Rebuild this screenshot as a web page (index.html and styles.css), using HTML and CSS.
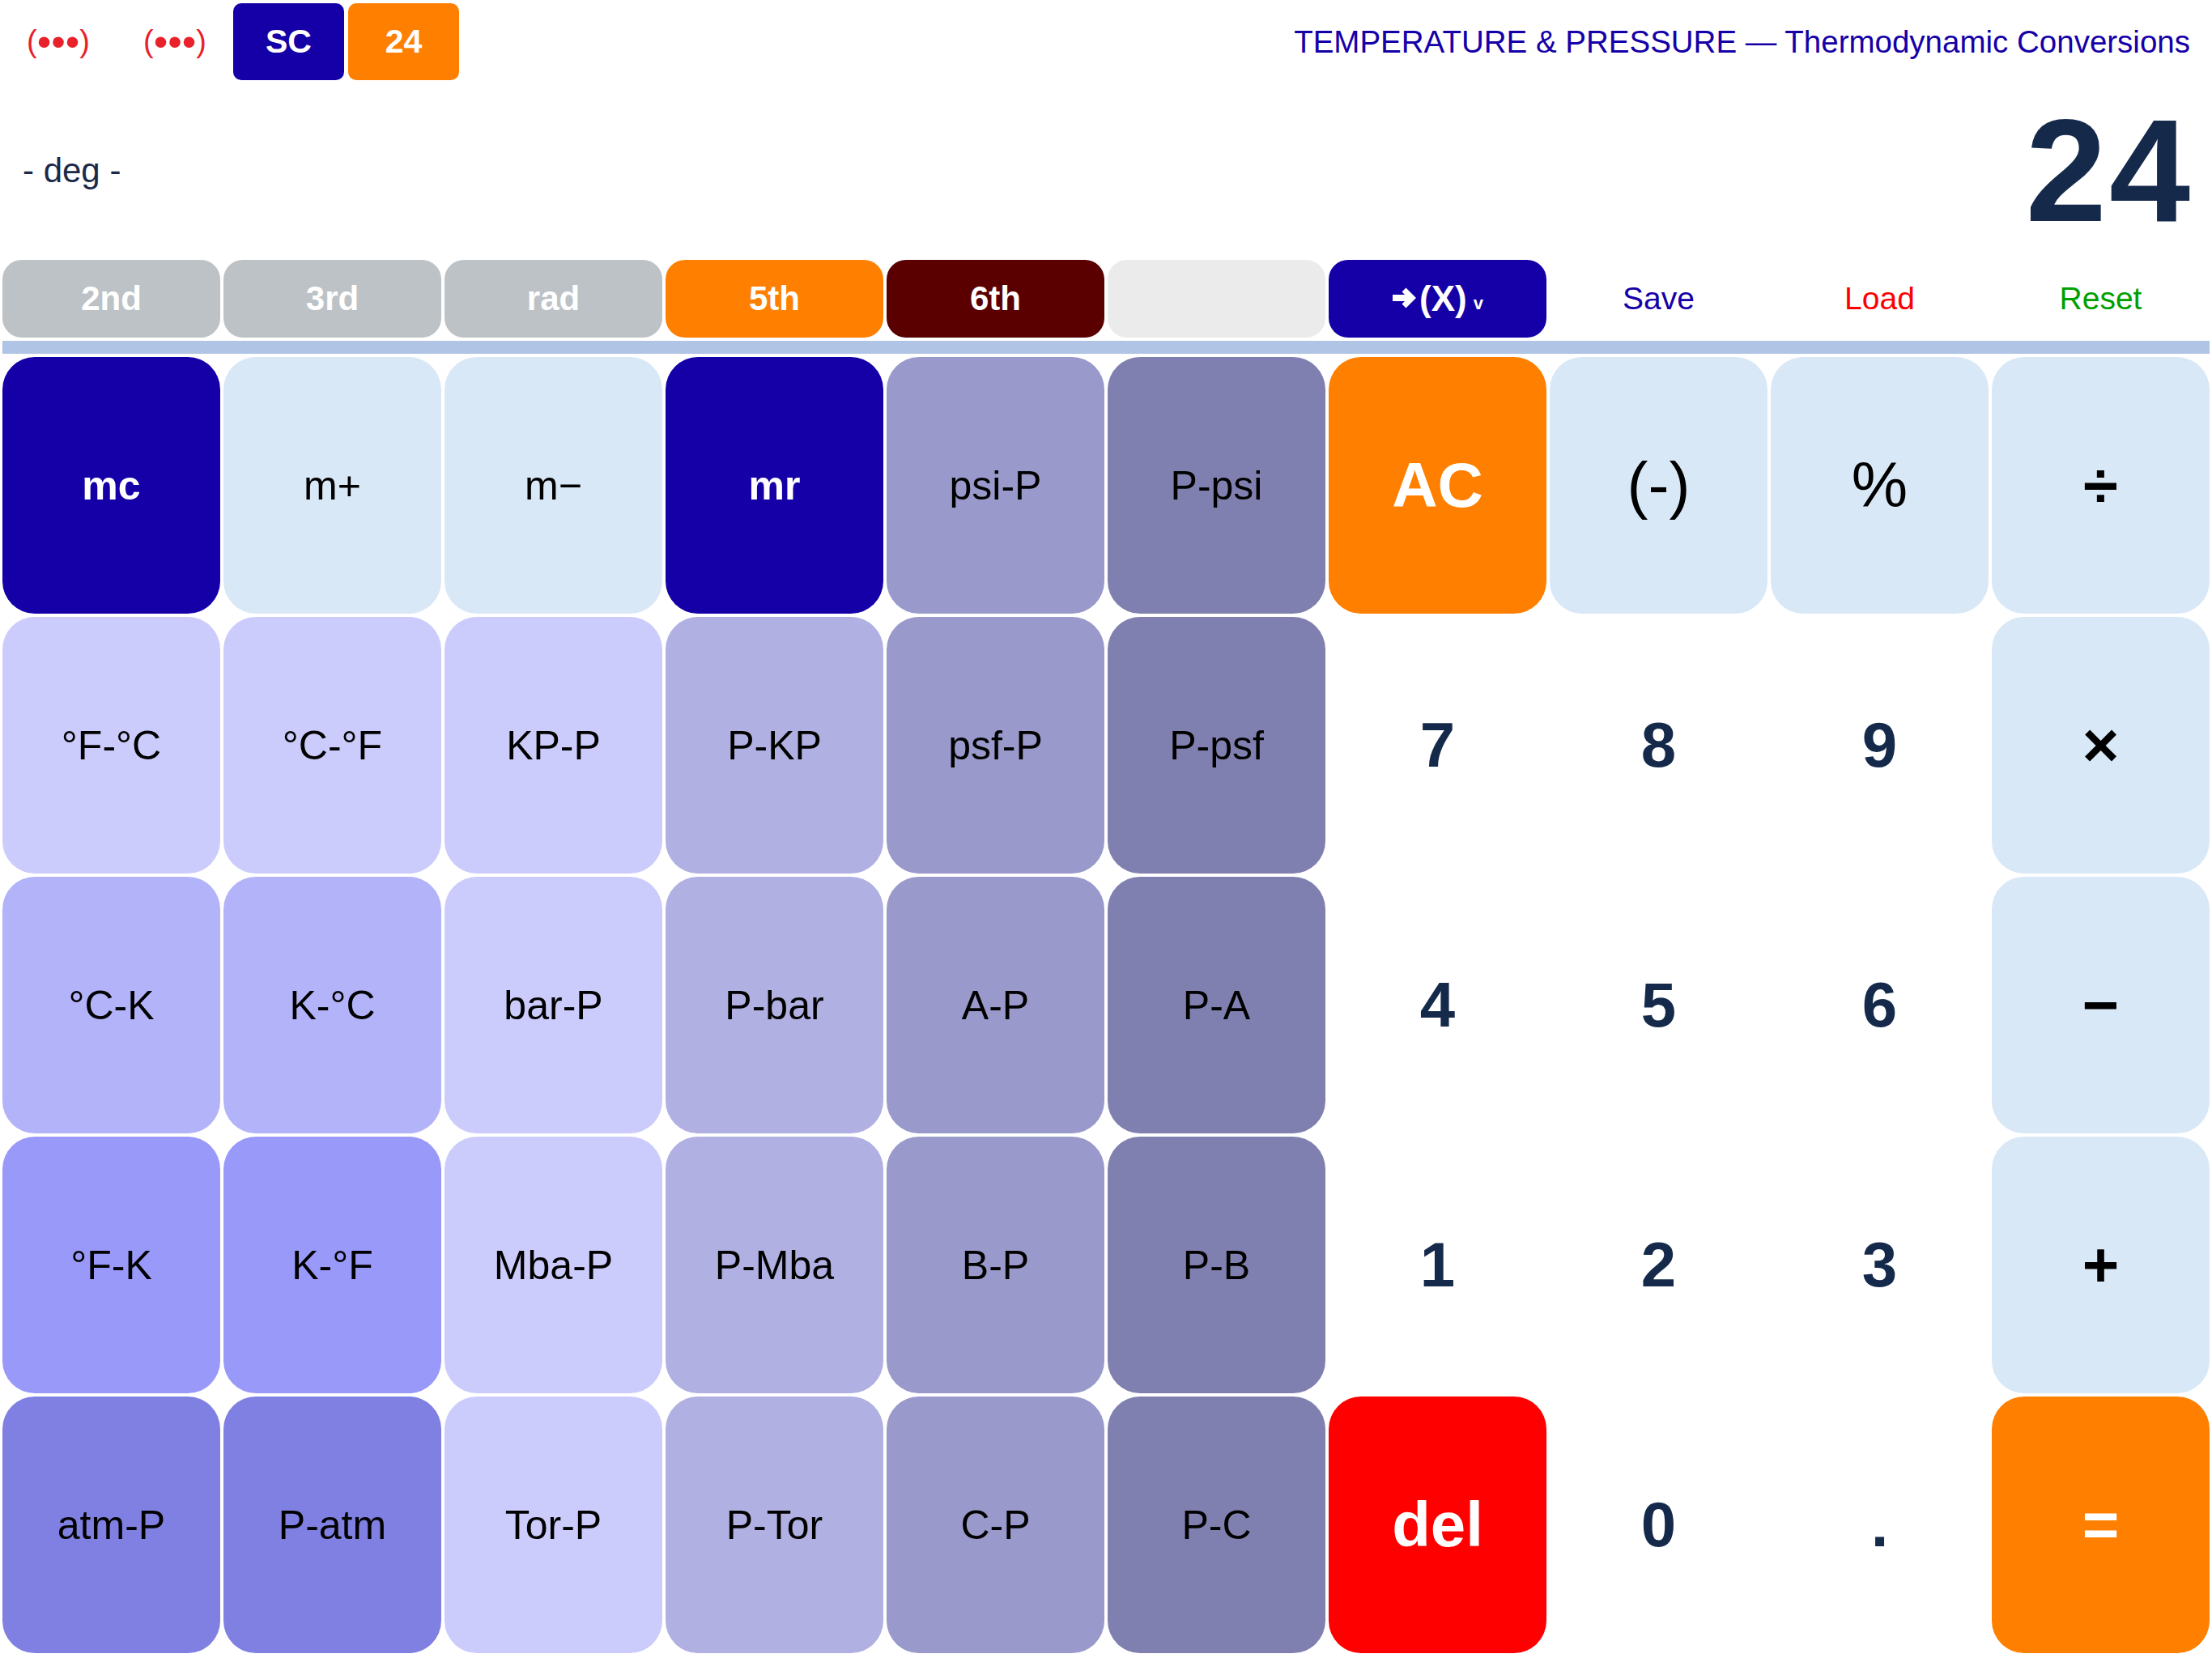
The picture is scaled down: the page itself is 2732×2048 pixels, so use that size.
FILE: index.html
```html
<!DOCTYPE html>
<html lang="en">
<head>
<meta charset="utf-8">
<title>Temperature &amp; Pressure Calculator</title>
<link rel="stylesheet" href="styles.css">
</head>
<body>
<div class="app">
  <header class="topbar">
    <div class="topbar-left">
      <span class="sig">(<span class="dots">•••</span>)</span>
      <span class="sig">(<span class="dots">•••</span>)</span>
      <div class="badges">
        <span class="badge badge-sc">SC</span>
        <span class="badge badge-num">24</span>
      </div>
    </div>
    <div class="title">TEMPERATURE &amp; PRESSURE — Thermodynamic Conversions</div>
  </header>

  <section class="display">
    <div class="mode">- deg -</div>
    <div class="value">24</div>
  </section>

  <nav class="fnrow">
    <div class="fn fn-grey">2nd</div>
    <div class="fn fn-grey">3rd</div>
    <div class="fn fn-grey">rad</div>
    <div class="fn fn-orange">5th</div>
    <div class="fn fn-maroon">6th</div>
    <div class="fn fn-blank"></div>
    <div class="fn fn-blue">
      <svg class="arrow" width="30" height="28" viewBox="0 0 30 28" aria-hidden="true">
        <path d="M1 14 H24" stroke="#fff" stroke-width="8" fill="none"/>
        <path d="M15 4 L25 14 L15 24" stroke="#fff" stroke-width="7" fill="none" stroke-linejoin="miter"/>
      </svg>
      <span class="fx">(X)</span><span class="caret">v</span>
    </div>
    <div class="fn fn-link link-save">Save</div>
    <div class="fn fn-link link-load">Load</div>
    <div class="fn fn-link link-reset">Reset</div>
  </nav>

  <div class="sep"></div>

  <main class="keys">
    <div class="key k-dark">mc</div>
    <div class="key k-light">m+</div>
    <div class="key k-light">m−</div>
    <div class="key k-dark">mr</div>
    <div class="key k-c5">psi-P</div>
    <div class="key k-c6">P-psi</div>
    <div class="key k-orange k-big">AC</div>
    <div class="key k-light k-op">(-)</div>
    <div class="key k-light k-op">%</div>
    <div class="key k-light k-op k-bold">÷</div>

    <div class="key k-lav">°F-°C</div>
    <div class="key k-lav">°C-°F</div>
    <div class="key k-lav">KP-P</div>
    <div class="key k-c4">P-KP</div>
    <div class="key k-c5">psf-P</div>
    <div class="key k-c6">P-psf</div>
    <div class="key k-num">7</div>
    <div class="key k-num">8</div>
    <div class="key k-num">9</div>
    <div class="key k-light k-op k-bold">×</div>

    <div class="key k-r3">°C-K</div>
    <div class="key k-r3">K-°C</div>
    <div class="key k-lav">bar-P</div>
    <div class="key k-c4">P-bar</div>
    <div class="key k-c5">A-P</div>
    <div class="key k-c6">P-A</div>
    <div class="key k-num">4</div>
    <div class="key k-num">5</div>
    <div class="key k-num">6</div>
    <div class="key k-light k-op k-bold">−</div>

    <div class="key k-r4">°F-K</div>
    <div class="key k-r4">K-°F</div>
    <div class="key k-lav">Mba-P</div>
    <div class="key k-c4">P-Mba</div>
    <div class="key k-c5">B-P</div>
    <div class="key k-c6">P-B</div>
    <div class="key k-num">1</div>
    <div class="key k-num">2</div>
    <div class="key k-num">3</div>
    <div class="key k-light k-op k-bold">+</div>

    <div class="key k-r5">atm-P</div>
    <div class="key k-r5">P-atm</div>
    <div class="key k-lav">Tor-P</div>
    <div class="key k-c4">P-Tor</div>
    <div class="key k-c5">C-P</div>
    <div class="key k-c6">P-C</div>
    <div class="key k-red k-big">del</div>
    <div class="key k-num">0</div>
    <div class="key k-num">.</div>
    <div class="key k-orange k-big">=</div>
  </main>
</div>
</body>
</html>
```

FILE: styles.css
```css
* {
  box-sizing: border-box;
  margin: 0;
  padding: 0;
}

html,
body {
  width: 2732px;
  height: 2048px;
  background: #ffffff;
  overflow: hidden;
}

body {
  font-family: "Liberation Sans", Arial, sans-serif;
  color: #000;
}

.app {
  display: flex;
  flex-direction: column;
}

/* ---------- top bar ---------- */
.topbar {
  display: flex;
  justify-content: space-between;
  align-items: flex-start;
  height: 104px;
  padding-top: 4px;
  padding-right: 27px;
}

.topbar-left {
  display: flex;
  align-items: center;
  height: 95px;
}

.sig {
  width: 144px;
  text-align: center;
  color: #e8212a;
  font-size: 38px;
  line-height: 1;
}

.sig .dots {
  font-size: 50px;
  vertical-align: -0.1em;
}

.badges {
  display: flex;
  gap: 5px;
}

.badge {
  width: 137px;
  height: 95px;
  border-radius: 10px;
  display: flex;
  align-items: center;
  justify-content: center;
  color: #fff;
  font-weight: 700;
  font-size: 41px;
}

.badge-sc {
  background: #1500a8;
}

.badge-num {
  background: #ff8000;
}

.title {
  margin-top: 29px;
  font-size: 38.5px;
  line-height: 1;
  color: #1500a8;
  white-space: nowrap;
}

/* ---------- display ---------- */
.display {
  display: flex;
  justify-content: space-between;
  align-items: flex-start;
  height: 217px;
  padding: 0 27px 0 28px;
}

.mode {
  margin-top: 86px;
  font-size: 42px;
  line-height: 1;
  color: #1b2a4a;
}

.value {
  margin-top: 17px;
  font-size: 180px;
  font-weight: 700;
  line-height: 1;
  letter-spacing: 3px;
  margin-right: -3px;
  color: #152a4b;
}

/* ---------- function row ---------- */
.fnrow {
  display: grid;
  grid-template-columns: repeat(10, 1fr);
  gap: 4px;
  padding: 0 3px;
  height: 96px;
}

.fn {
  border-radius: 24px;
  display: flex;
  align-items: center;
  justify-content: center;
  font-size: 42px;
  font-weight: 700;
  color: #fff;
  white-space: nowrap;
}

.fn-grey {
  background: #bdc2c6;
}

.fn-orange {
  background: #ff8000;
}

.fn-maroon {
  background: #5a0000;
}

.fn-blank {
  background: #ebebeb;
}

.fn-blue {
  background: #1500a8;
  font-size: 44px;
}

.fn-blue .arrow {
  margin-right: 4px;
  margin-top: -2px;
}

.fn-blue .caret {
  font-size: 22px;
  margin-left: 8px;
  margin-top: 12px;
}

.fn-link {
  font-weight: 400;
  font-size: 39px;
}

.link-save {
  color: #1500a8;
}

.link-load {
  color: #ff0000;
}

.link-reset {
  color: #00a000;
}

.sep {
  height: 16px;
  margin: 4px 3px;
  background: #b0c4e6;
}

/* ---------- keypad ---------- */
.keys {
  display: grid;
  grid-template-columns: repeat(10, 1fr);
  grid-template-rows: repeat(5, 317px);
  gap: 4px;
  padding: 0 3px;
}

.key {
  border-radius: 40px;
  display: flex;
  align-items: center;
  justify-content: center;
  font-size: 50px;
  color: #000;
  white-space: nowrap;
}

.k-dark {
  background: #1500a8;
  color: #fff;
  font-weight: 700;
}

.k-light {
  background: #d9e8f7;
}

.k-lav {
  background: #ccccfc;
}

.k-r3 {
  background: #b3b3fa;
}

.k-r4 {
  background: #9999fa;
}

.k-r5 {
  background: #8080e2;
}

.k-c4 {
  background: #b0b0e2;
}

.k-c5 {
  background: #9999cb;
}

.k-c6 {
  background: #8080b0;
}

.k-orange {
  background: #ff8000;
}

.k-red {
  background: #ff0000;
}

.k-big {
  color: #fff;
  font-weight: 700;
  font-size: 78px;
}

.k-op {
  font-size: 78px;
}

.k-bold {
  font-weight: 700;
}

.k-num {
  color: #152a4a;
  font-weight: 700;
  font-size: 78px;
}
```
